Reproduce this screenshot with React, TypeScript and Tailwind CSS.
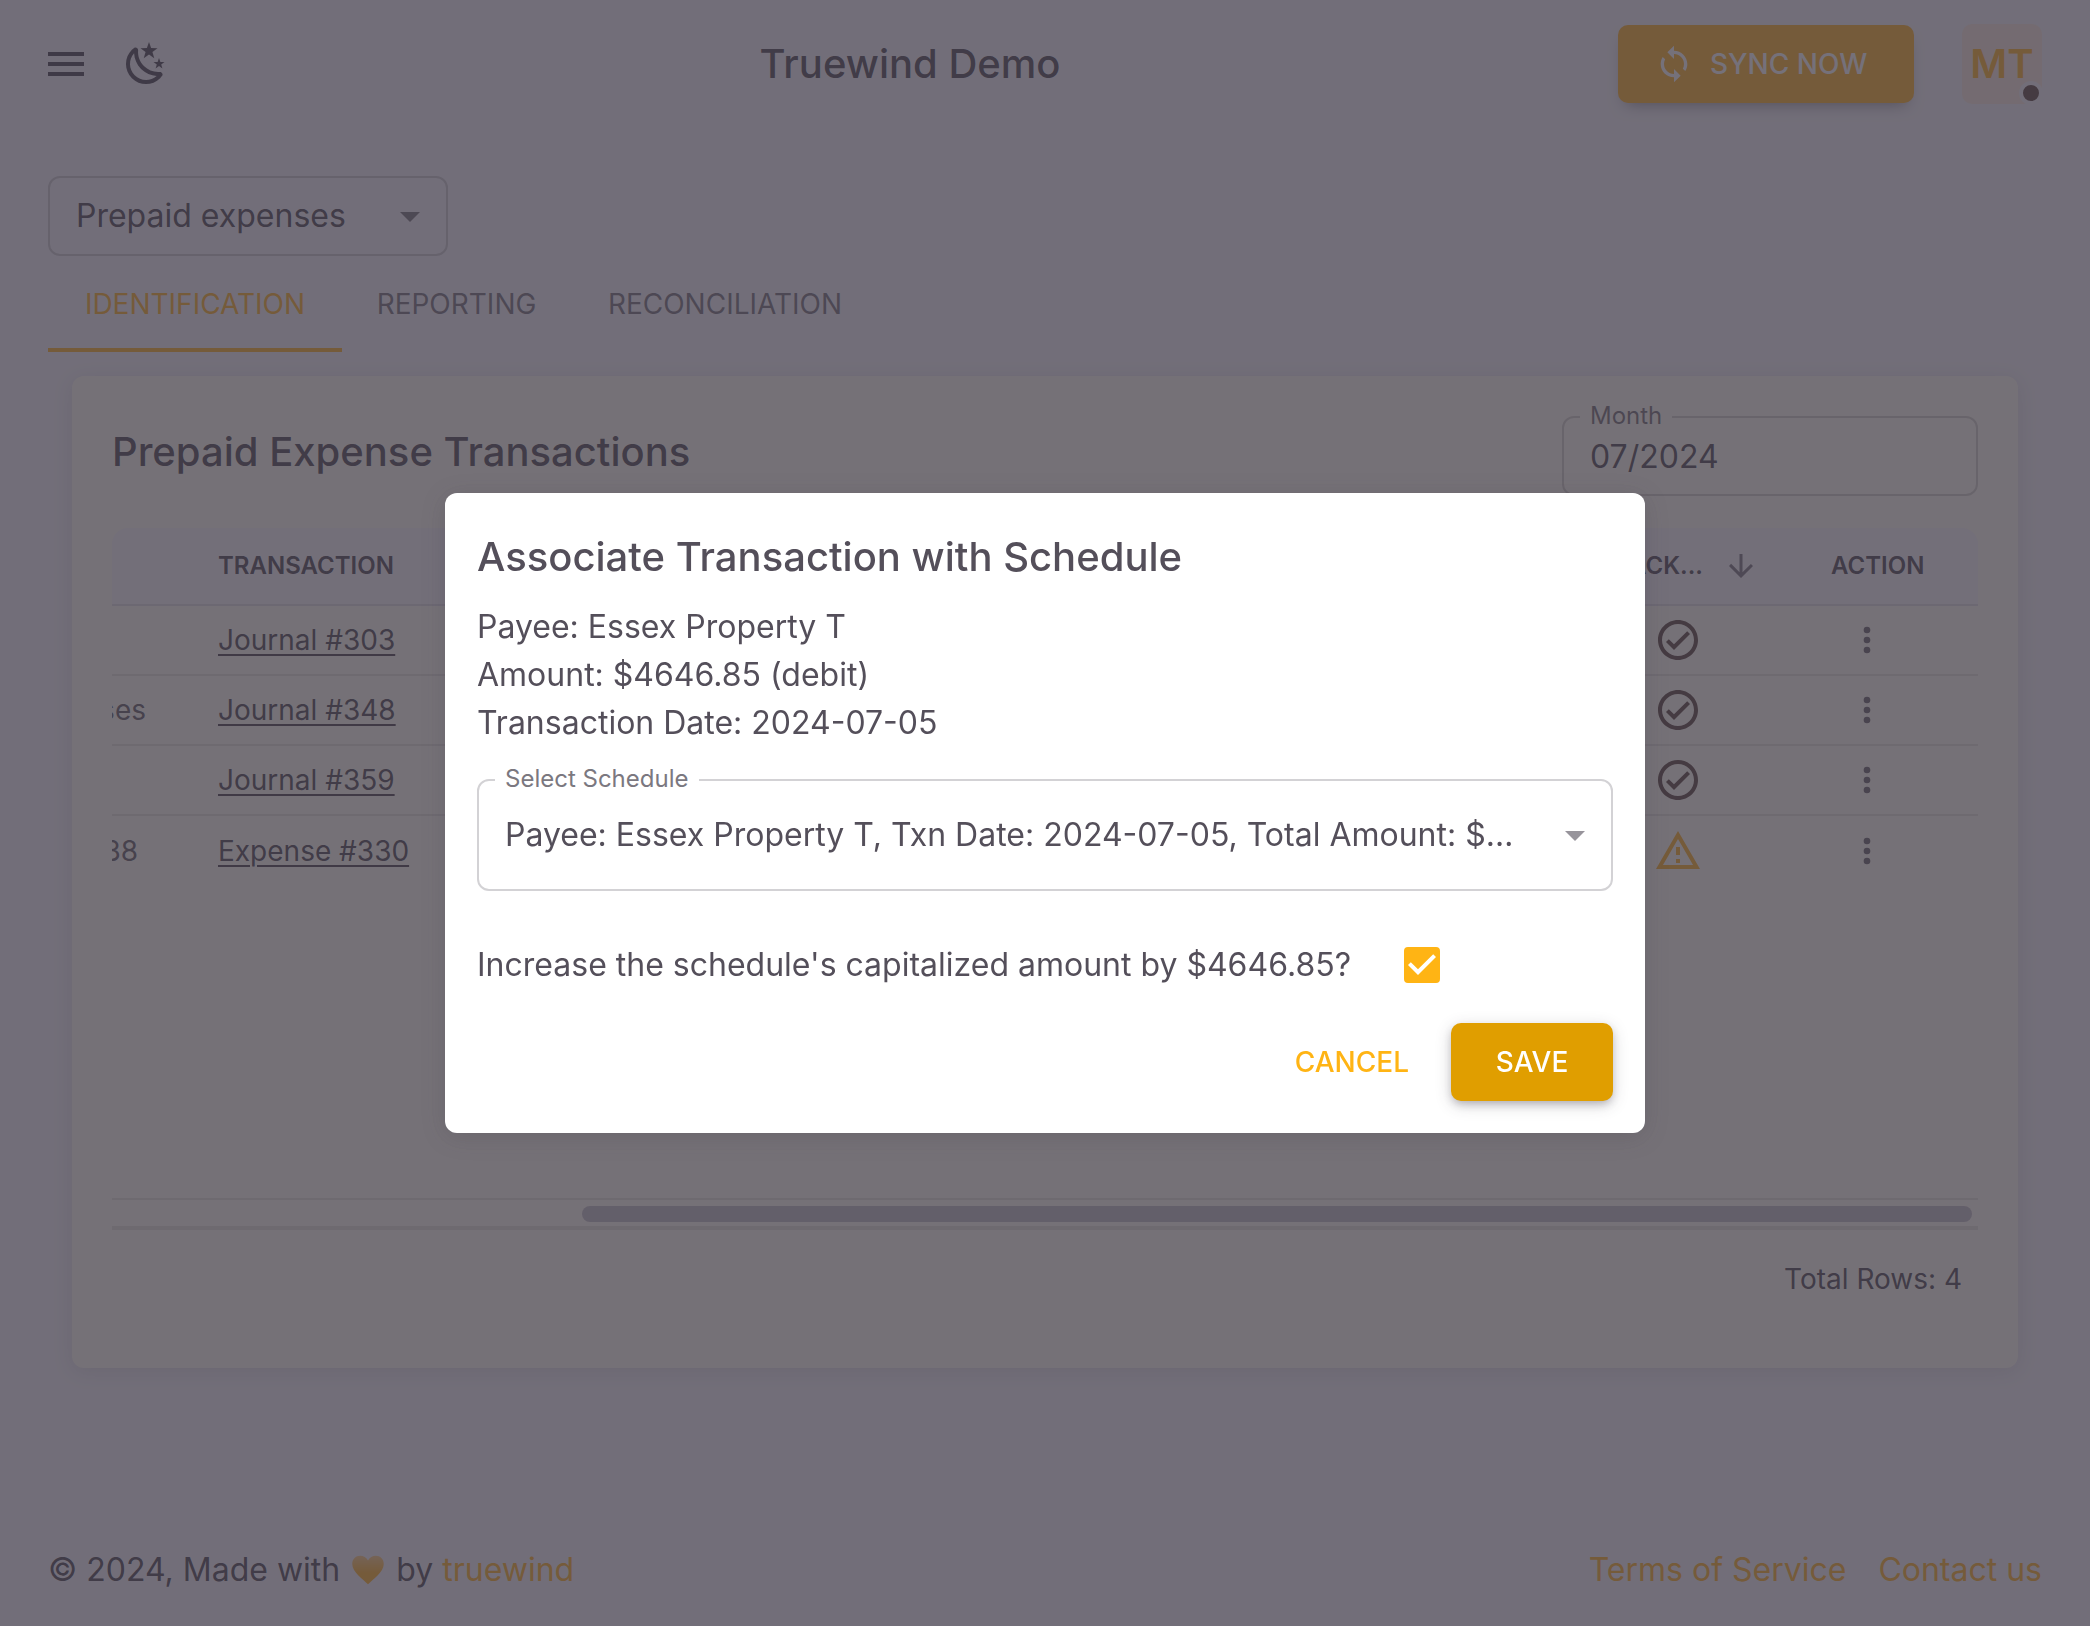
import React, { useState } from 'react'

type IconProps = { path: string; className?: string }

const Icon = ({ path, className }: IconProps) => (
  <svg viewBox="0 0 24 24" fill="currentColor" aria-hidden="true" className={className}>
    <path d={path} />
  </svg>
)

const icons = {
  menu: 'M3 6H21V8H3V6M3 11H21V13H3V11M3 16H21V18H3V16Z',
  night:
    'M17.75,4.09L15.22,6.03L16.13,9.09L13.5,7.28L10.87,9.09L11.78,6.03L9.25,4.09L12.44,4L13.5,1L14.56,4L17.75,4.09M21.25,11L19.61,12.25L20.2,14.23L18.5,13.06L16.8,14.23L17.39,12.25L15.75,11L17.81,10.95L18.5,9L19.19,10.95L21.25,11M18.97,15.95C19.8,15.87 20.69,17.05 20.16,17.8C19.84,18.25 19.5,18.67 19.08,19.07C15.17,23 8.84,23 4.94,19.07C1.03,15.17 1.03,8.83 4.94,4.93C5.34,4.53 5.76,4.17 6.21,3.85C6.96,3.32 8.14,4.21 8.06,5.04C7.79,7.9 8.75,10.87 10.95,13.06C13.14,15.26 16.1,16.22 18.97,15.95M17.33,17.97C14.5,17.81 11.7,16.64 9.53,14.5C7.36,12.31 6.2,9.5 6.04,6.68C3.23,9.82 3.34,14.64 6.35,17.66C9.37,20.67 14.19,20.78 17.33,17.97Z',
  sync: 'M12 4V1L8 5L12 9V6C15.31 6 18 8.69 18 12C18 13.01 17.75 13.97 17.3 14.8L18.76 16.26C19.54 15.03 20 13.57 20 12C20 7.58 16.42 4 12 4M12 18C8.69 18 6 15.31 6 12C6 10.99 6.25 10.03 6.7 9.2L5.24 7.74C4.46 8.97 4 10.43 4 12C4 16.42 7.58 20 12 20V23L16 19L12 15V18Z',
  caret: 'M7 10L12 15L17 10Z',
  arrowDown: 'M20 12L18.59 10.59L13 16.17V4H11V16.17L5.42 10.58L4 12L12 20L20 12Z',
  dots: 'M12,16A2,2 0 0,1 14,18A2,2 0 0,1 12,20A2,2 0 0,1 10,18A2,2 0 0,1 12,16M12,10A2,2 0 0,1 14,12A2,2 0 0,1 12,14A2,2 0 0,1 10,12A2,2 0 0,1 12,10M12,4A2,2 0 0,1 14,6A2,2 0 0,1 12,8A2,2 0 0,1 10,6A2,2 0 0,1 12,4Z',
  checkCircle:
    'M12 2C6.5 2 2 6.5 2 12S6.5 22 12 22 22 17.5 22 12 17.5 2 12 2M12 20C7.59 20 4 16.41 4 12S7.59 4 12 4 20 7.59 20 12 16.41 20 12 20M16.59 7.58L10 14.17L7.41 11.59L6 13L10 17L18 9L16.59 7.58Z',
  alert: 'M12 2L1 21H23M12 6L19.53 19H4.47M11 10V14H13V10M11 16V18H13V16',
  heart:
    'M12 21.5C9 18.5 1.5 13.5 1.5 8C1.5 4.7 3.9 2.5 6.8 2.5C9 2.5 11 3.7 12 5.6C13 3.7 15 2.5 17.2 2.5C20.1 2.5 22.5 4.7 22.5 8C22.5 13.5 15 18.5 12 21.5Z',
}

const tabs = [
  { label: 'IDENTIFICATION', className: 'w-[294px] border-[#ffb42a] text-[#ffb42a]' },
  { label: 'REPORTING', className: 'w-[229px] border-transparent text-[#3a3541]/68' },
  { label: 'RECONCILIATION', className: 'w-[308px] border-transparent text-[#3a3541]/68' },
]

const rows = [
  { account: '', accountClass: 'pr-8', name: 'Journal #303', ok: true },
  { account: 'ses', accountClass: 'pr-8', name: 'Journal #348', ok: true },
  { account: '', accountClass: 'pr-8', name: 'Journal #359', ok: true },
  { account: '38', accountClass: 'pr-10', name: 'Expense #330', ok: false },
]

function Header() {
  return (
    <header className="flex h-32 items-center justify-between px-12">
      <div className="-ml-1.5 flex items-center gap-8 pr-8">
        <button aria-label="Open menu">
          <Icon path={icons.menu} className="size-12" />
        </button>
        <button aria-label="Toggle dark mode">
          <Icon path={icons.night} className="size-12" />
        </button>
      </div>
      <h1 className="text-[40px] leading-[64px] font-medium">Truewind Demo</h1>
      <div className="flex items-center gap-12">
        <button className="flex h-[78px] w-[296px] items-center gap-4 rounded-[10px] bg-[#ffb42a] pl-9 text-[28px] font-medium text-white shadow-[0_8px_16px_-8px_rgba(58,53,65,0.6)]">
          <Icon path={icons.sync} className="size-10" />
          SYNC NOW
        </button>
        <button
          aria-label="Account MT"
          className="relative flex size-20 items-center justify-center rounded-[10px] bg-[#fbece0] text-[40px] font-semibold text-[#ffb42a]"
        >
          MT
          <span className="absolute -right-px -bottom-px size-6 rounded-full border-4 border-[#f4f5fa] bg-[#5e4a44]" />
        </button>
      </div>
    </header>
  )
}

function Transactions() {
  return (
    <section className="mx-6 mt-6 rounded-xl bg-[#fffff4] p-10 pb-0 shadow-[0_4px_20px_rgba(58,53,65,0.12)]">
      <div className="flex items-start justify-between">
        <h2 className="pt-1 text-[40px] leading-[64px] font-medium">Prepaid Expense Transactions</h2>
        <div className="relative w-[416px]">
          <label
            htmlFor="month"
            className="absolute -top-4 left-[18px] bg-[#fffff4] px-2.5 text-2xl text-[#3a3541]/70"
          >
            Month
          </label>
          <input
            id="month"
            defaultValue="07/2024"
            className="h-20 w-full rounded-xl border-2 border-[#3a3541]/22 px-[26px] text-[32px]"
          />
        </div>
      </div>

      <div className="mt-8 min-h-[670px] overflow-hidden">
        <table className="w-full table-fixed border-separate border-spacing-0 text-left">
          <colgroup>
            <col className="w-[66px]" />
            <col />
            <col className="w-[226px]" />
            <col className="w-[187px]" />
          </colgroup>
          <thead>
            <tr className="h-[78px] text-2xl">
              <th aria-label="Account" className="rounded-tl-2xl border-b-2 border-[#3a3541]/12 bg-[#f8f8fc]" />
              <th className="border-b-2 border-[#3a3541]/12 bg-[#f8f8fc] px-10 font-semibold">TRANSACTION</th>
              <th className="border-b-2 border-[#3a3541]/12 bg-[#f8f8fc] font-semibold">
                <div className="flex items-center justify-end gap-5 pr-8">
                  TRACK...
                  <Icon path={icons.arrowDown} className="size-9 text-[#3a3541]/65" />
                </div>
              </th>
              <th className="rounded-tr-2xl border-b-2 border-[#3a3541]/12 bg-[#f8f8fc] px-10 font-semibold">ACTION</th>
            </tr>
          </thead>
          <tbody className="text-[28px] [&>tr:not(:last-child)>td]:border-b-2 [&>tr>td]:border-[#3a3541]/12">
            {rows.map((row) => (
              <tr key={row.name} className="h-[70px]">
                <td className="overflow-hidden">
                  <div className={`flex justify-end whitespace-nowrap text-[#3a3541]/80 ${row.accountClass}`}>
                    {row.account}
                  </div>
                </td>
                <td className="px-10">
                  <a href="#transaction" className="underline decoration-2 underline-offset-4">
                    {row.name}
                  </a>
                </td>
                <td>
                  <Icon
                    path={row.ok ? icons.checkCircle : icons.alert}
                    className={row.ok ? 'mx-auto size-12 text-[#5e4a44]' : 'mx-auto size-12 text-[#ffb42a]'}
                  />
                </td>
                <td className="px-10">
                  <button aria-label={`Actions for ${row.name}`} className="block px-4 text-[#3a3541]/75">
                    <Icon path={icons.dots} className="size-10" />
                  </button>
                </td>
              </tr>
            ))}
          </tbody>
        </table>
      </div>
      <div className="flex h-8 justify-end border-t-2 border-b-4 border-[#3a3541]/12 px-1.5 pt-1.5">
        <div className="h-4 w-3/4 rounded-full bg-[#c4c2ca]" />
      </div>
      <div className="flex h-[138px] justify-end px-4 pt-7 text-[28px] leading-[42px]">Total Rows: 4</div>
    </section>
  )
}

function Footer() {
  return (
    <footer className="mt-auto flex items-center justify-between px-12 py-8 text-[32px] leading-[48px]">
      <p className="flex items-center gap-2.5">
        © 2024, Made with
        <svg viewBox="0 0 24 24" aria-hidden="true" className="size-9">
          <defs>
            <linearGradient id="heart-fill" x1="0" y1="0" x2="0" y2="1">
              <stop offset="0" stopColor="#ffd08a" />
              <stop offset="0.6" stopColor="#ffb42a" />
            </linearGradient>
          </defs>
          <path d={icons.heart} fill="url(#heart-fill)" />
        </svg>
        <span>
          by{' '}
          <a href="#truewind" className="text-[#ffb42a]">
            truewind
          </a>
        </span>
      </p>
      <nav className="flex gap-8 text-[#ffb42a]">
        <a href="#terms">Terms of Service</a>
        <a href="#contact">Contact us</a>
      </nav>
    </footer>
  )
}

function AssociateDialog() {
  const [increase, setIncrease] = useState(true)
  return (
    <div className="fixed inset-0 flex items-center justify-center bg-[#3a3541]/70">
      <div
        role="dialog"
        aria-modal="true"
        aria-labelledby="dialog-title"
        className="w-full max-w-[1200px] rounded-xl bg-white p-8 text-[32px] leading-[48px] text-[#544f5a] shadow-[0_4px_24px_rgba(58,53,65,0.2)]"
      >
        <h2 id="dialog-title" className="text-[40px] leading-[64px] font-medium">
          Associate Transaction with Schedule
        </h2>
        <p className="mt-3.5">Payee: Essex Property T</p>
        <p>Amount: $4646.85 (debit)</p>
        <p>Transaction Date: 2024-07-05</p>
        <div className="relative mt-8">
          <label
            htmlFor="schedule"
            className="absolute -top-4 left-[18px] bg-white px-2.5 text-2xl text-[#7b7880]"
          >
            Select Schedule
          </label>
          <select
            id="schedule"
            className="block h-28 w-full appearance-none truncate rounded-xl border-2 border-[#d3d2d5] pr-20 pl-[26px]"
          >
            <option>Payee: Essex Property T, Txn Date: 2024-07-05, Total Amount: $4646.85</option>
          </select>
          <Icon path={icons.caret} className="pointer-events-none absolute top-8 right-3.5 size-12 text-[#97949b]" />
        </div>
        <div className="mt-[50px] flex items-center gap-10">
          <label htmlFor="increase" className="w-[887px]">
            Increase the schedule's capitalized amount by $4646.85?
          </label>
          <span className="relative flex size-9">
            <input
              id="increase"
              type="checkbox"
              checked={increase}
              onChange={(e) => setIncrease(e.target.checked)}
              className="peer size-9 appearance-none rounded-sm border-4 border-[#ffb414] checked:bg-[#ffb414]"
            />
            <svg
              viewBox="3 3 18 18"
              aria-hidden="true"
              className="pointer-events-none absolute inset-0 hidden size-9 fill-white peer-checked:block"
            >
              <path d="M10 17L5 12L6.41 10.59L10 14.17L17.59 6.58L19 8L10 17Z" />
            </svg>
          </span>
        </div>
        <div className="mt-[34px] flex justify-end gap-4 text-[28px] font-medium">
          <button className="h-[78px] px-[26px] text-[#ffb414]">CANCEL</button>
          <button className="h-[78px] w-[162px] rounded-[10px] bg-[#e09e00] text-white shadow-[0_4px_8px_-2px_rgba(58,53,65,0.3),0_4px_16px_rgba(58,53,65,0.22)]">
            SAVE
          </button>
        </div>
      </div>
    </div>
  )
}

export default function App() {
  return (
    <div className="flex min-h-screen flex-col bg-[#f4f5fa] font-['Inter',sans-serif] text-[#3a3541]/90">
      <Header />
      <main className="px-12 pt-12">
        <div className="relative w-[400px]">
          <select
            aria-label="Account type"
            className="block h-20 w-full appearance-none rounded-xl border-2 border-[#3a3541]/22 px-[26px] text-[32px]"
          >
            <option>Prepaid expenses</option>
          </select>
          <Icon
            path={icons.caret}
            className="pointer-events-none absolute top-4 right-3.5 size-12 text-[#3a3541]/65"
          />
        </div>
        <div role="tablist" className="flex h-24 text-[28px]">
          {tabs.map((tab, i) => (
            <button
              key={tab.label}
              role="tab"
              aria-selected={i === 0}
              className={`border-b-4 pt-1 ${tab.className}`}
            >
              {tab.label}
            </button>
          ))}
        </div>
        <Transactions />
      </main>
      <Footer />
      <AssociateDialog />
    </div>
  )
}
